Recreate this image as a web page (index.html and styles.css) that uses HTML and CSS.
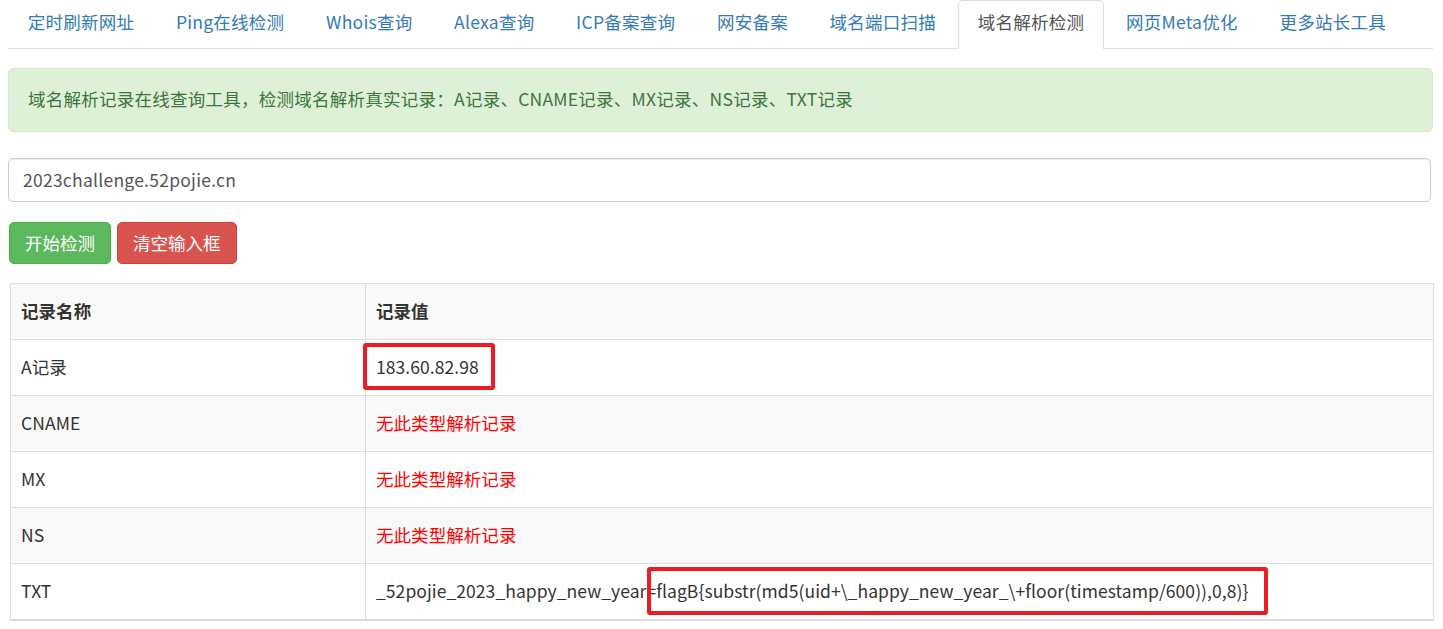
FILE: index.html
```html
<!DOCTYPE html>
<html lang="zh-CN">
<head>
<meta charset="utf-8">
<title>域名解析检测</title>
<link rel="stylesheet" href="styles.css">
</head>
<body>
<div class="container">
  <ul class="nav-tabs">
    <li><a href="#">定时刷新网址</a></li>
    <li><a href="#">Ping在线检测</a></li>
    <li><a href="#">Whois查询</a></li>
    <li><a href="#">Alexa查询</a></li>
    <li><a href="#">ICP备案查询</a></li>
    <li><a href="#">网安备案</a></li>
    <li><a href="#">域名端口扫描</a></li>
    <li class="active"><a href="#">域名解析检测</a></li>
    <li><a href="#">网页Meta优化</a></li>
    <li><a href="#">更多站长工具</a></li>
  </ul>

  <div class="alert">域名解析记录在线查询工具，检测域名解析真实记录：A记录、CNAME记录、MX记录、NS记录、TXT记录</div>

  <input class="form-control" type="text" value="2023challenge.52pojie.cn">

  <div class="btn-row">
    <button class="btn btn-success">开始检测</button>
    <button class="btn btn-danger">清空输入框</button>
  </div>

  <table class="table">
    <tbody>
      <tr><th class="col-name">记录名称</th><th>记录值</th></tr>
      <tr><td>A记录</td><td><span class="mark mark-a">183.60.82.98</span></td></tr>
      <tr><td>CNAME</td><td class="none">无此类型解析记录</td></tr>
      <tr><td>MX</td><td class="none">无此类型解析记录</td></tr>
      <tr><td>NS</td><td class="none">无此类型解析记录</td></tr>
      <tr><td>TXT</td><td>_52pojie_2023_happy_new_year=<span class="mark mark-txt">flagB{substr(md5(uid+\_happy_new_year_\+floor(timestamp/600)),0,8)}</span></td></tr>
    </tbody>
  </table>
</div>
</body>
</html>
```

FILE: styles.css
```css
* { box-sizing: border-box; }

html, body {
  margin: 0;
  padding: 0;
  background: #fff;
}

body {
  font-family: "Noto Sans CJK SC", "Noto Sans", sans-serif;
  font-size: 17.5px;
  line-height: 25px;
  letter-spacing: 0.25px;
  color: #333;
}

.container {
  padding: 0 10px 0 8px;
}

.nav-tabs {
  list-style: none;
  margin: 0;
  padding: 0;
  display: flex;
  border-bottom: 1px solid #ddd;
}

.nav-tabs li {
  margin-bottom: -1px;
  margin-right: 2.2px;
}

.nav-tabs a {
  display: block;
  padding: 8px 18.75px 14px;
  border: 1px solid transparent;
  border-bottom: none;
  color: #337ab7;
  text-decoration: none;
  border-radius: 5px 5px 0 0;
}

.nav-tabs li.active a {
  color: #555;
  background: #fff;
  border-color: #ddd;
  padding-bottom: 15px;
}

.alert {
  margin: 19px 0 26px;
  padding: 17px 19px 20px;
  background: #dff0d8;
  border: 1px solid #d6e9c6;
  border-radius: 5px;
  color: #3c763d;
}

.form-control {
  display: block;
  width: calc(100% - 2px);
  height: 44px;
  padding: 0 14px 2px;
  font-family: inherit;
  font-size: 17.5px;
  letter-spacing: 0.25px;
  color: #555;
  border: 1px solid #ccc;
  border-radius: 5px;
  box-shadow: inset 0 1px 1px rgba(0,0,0,.075);
  background: #fff;
}

.btn-row {
  display: flex;
  gap: 6px;
  margin: 20px 0 19px 1px;
}

.btn {
  height: 42px;
  padding: 0 15px 2px;
  font-family: inherit;
  font-size: 17.5px;
  color: #fff;
  border: 1px solid transparent;
  border-radius: 5px;
}

.btn-success {
  background: #5cb85c;
  border-color: #4cae4c;
}

.btn-danger {
  background: #d9534f;
  border-color: #d43f3a;
}

.table {
  width: calc(100% - 1px);
  margin-left: 2px;
  border-collapse: collapse;
  border: 1px solid #ddd;
  border-bottom-width: 2px;
  letter-spacing: 0.06px;
}

.table th,
.table td {
  text-align: left;
  padding: 14px 10px 16px;
  border: 1px solid #ddd;
  vertical-align: top;
}

.table th {
  font-weight: bold;
}

.table .col-name {
  width: 355px;
}

.table tr:nth-child(odd) {
  background: #f9f9f9;
}

.none {
  color: #f00;
}

.mark {
  position: relative;
}

.mark::after {
  content: "";
  position: absolute;
  border: 4px solid #ed1c24;
  border-radius: 3px;
}

.mark-a::after {
  top: -11px;
  bottom: -11px;
  left: -13px;
  right: -16px;
}

.mark-txt::after {
  top: -11px;
  bottom: -12px;
  left: -9px;
  right: -20px;
}
```
